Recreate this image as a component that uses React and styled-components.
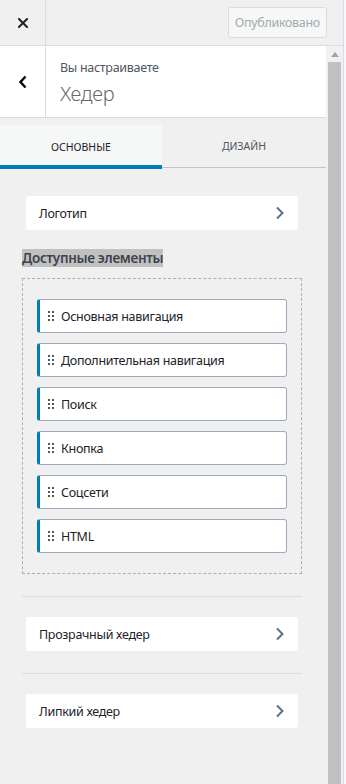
import React from "react";
import styled, { createGlobalStyle } from "styled-components";

const GlobalStyle = createGlobalStyle`
  * { box-sizing: border-box; }
  html, body { margin: 0; padding: 0; background: #ffffff; }
  body {
    font-family: "Noto Sans", "Open Sans", sans-serif;
    color: #1d2327;
    overflow: hidden;
  }
`;

const Page = styled.div`
  display: flex;
  width: 346px;
  height: 784px;
  overflow: hidden;
`;

const Sidebar = styled.div`
  width: 344px;
  flex: none;
  display: flex;
  flex-direction: column;
  background: #f0f0f1;
  border-right: 1px solid #dcdcde;
`;

const Preview = styled.div`
  flex: 1;
  background: #f6f8fb;
`;

const TopBar = styled.div`
  height: 46px;
  flex: none;
  display: flex;
  align-items: center;
  border-bottom: 1px solid #dcdcde;
  background: #f0f0f1;
`;

const CloseButton = styled.div`
  width: 46px;
  height: 45px;
  display: flex;
  align-items: center;
  justify-content: center;
  border-right: 1px solid #dcdcde;
  color: #1d2327;
`;

const PublishButton = styled.div`
  margin-left: auto;
  margin-right: 16px;
  height: 31px;
  padding: 0 6px;
  display: flex;
  align-items: center;
  border: 1px solid #dcdcde;
  border-radius: 3px;
  background: #f6f7f7;
  color: #a7aaad;
  font-size: 12.5px;
  letter-spacing: -0.3px;
`;

const Body = styled.div`
  flex: 1;
  display: flex;
  min-height: 0;
`;

const Content = styled.div`
  width: 326px;
  flex: none;
  display: flex;
  flex-direction: column;
`;

const Scrollbar = styled.div`
  width: 17px;
  flex: none;
  display: flex;
  flex-direction: column;
  align-items: center;
  background: #f1f1f1;
`;

const ScrollArrow = styled.div`
  height: 16px;
  display: flex;
  align-items: center;
  justify-content: center;
`;

const ScrollThumb = styled.div`
  width: 13px;
  flex: 1;
  background: #c1c1c1;
`;

const PanelHeader = styled.div`
  height: 72px;
  display: flex;
  background: #ffffff;
  border-bottom: 1px solid #dcdcde;
`;

const BackButton = styled.div`
  width: 46px;
  display: flex;
  align-items: center;
  justify-content: center;
  border-right: 1px solid #dcdcde;
`;

const HeaderText = styled.div`
  display: flex;
  flex-direction: column;
  padding: 12px 0 0 14px;
`;

const Eyebrow = styled.span`
  font-size: 12.5px;
  letter-spacing: -0.3px;
  line-height: 20px;
  color: #50575e;
`;

const HeaderTitle = styled.span`
  font-size: 20px;
  font-weight: 300;
  line-height: 28px;
  color: #646970;
  margin-top: 2px;
  letter-spacing: -0.3px;
`;

const Tabs = styled.div`
  display: flex;
  margin-top: 7px;
  height: 44px;
`;

const Tab = styled.div`
  width: ${(p) => (p.$active ? "162px" : "164px")};
  height: ${(p) => (p.$active ? "44px" : "43px")};
  display: flex;
  align-items: center;
  justify-content: center;
  font-size: 10.5px;
  text-transform: uppercase;
  background: ${(p) => (p.$active ? "#f6f7f7" : "transparent")};
  color: ${(p) => (p.$active ? "#1d2327" : "#50575e")};
  border-bottom: ${(p) => (p.$active ? "4px solid #007cba" : "1px solid #c3c4c7")};
  padding-top: ${(p) => (p.$active ? "4px" : "0")};
`;

const Section = styled.div`
  display: flex;
  flex-direction: column;
  padding: 0 24px 0 22px;
`;

const Card = styled.div`
  margin: ${(p) => p.$top}px 4px 0;
  height: 34px;
  display: flex;
  align-items: center;
  justify-content: space-between;
  padding: 0 13px;
  background: #ffffff;
  border-radius: 3px;
  font-size: 12.5px;
  letter-spacing: -0.3px;
  color: #1d2327;
`;

const GroupLabel = styled.span`
  align-self: flex-start;
  margin-top: 19px;
  font-size: 13.5px;
  letter-spacing: -0.3px;
  line-height: 18px;
  font-weight: 600;
  color: #3c434a;
  background: #c1c1c1;
`;

const DropZone = styled.div`
  margin-top: 11px;
  display: flex;
  flex-direction: column;
  gap: 10px;
  padding: 20px 14px;
  border: 1px dashed #a7b0bf;
`;

const Item = styled.div`
  height: 34px;
  display: flex;
  align-items: center;
  gap: 7px;
  padding-left: 8px;
  background: #ffffff;
  border: 1px solid #9eabbd;
  border-left: 3px solid #007cba;
  border-radius: 3px;
  font-size: 12.5px;
  letter-spacing: -0.3px;
  color: #1d2327;
`;

const Divider = styled.div`
  height: 1px;
  background: #dcdcde;
  margin-top: ${(p) => p.$top}px;
`;

const CloseIcon = () => (
  <svg width="10" height="10" viewBox="0 0 10 10">
    <path d="M1 1 L9 9 M9 1 L1 9" stroke="#1d2327" strokeWidth="2" strokeLinecap="square" />
  </svg>
);

const BackIcon = () => (
  <svg width="10" height="14" viewBox="0 0 10 14">
    <path d="M7.5 1.5 L2.5 7 L7.5 12.5" fill="none" stroke="#000" strokeWidth="2.4" />
  </svg>
);

const Chevron = () => (
  <svg width="10" height="14" viewBox="0 0 10 14">
    <path d="M2 1.5 L7.5 7 L2 12.5" fill="none" stroke="#5f6f85" strokeWidth="2" />
  </svg>
);

const Handle = () => (
  <svg width="6" height="10" viewBox="0 0 6 10">
    {[0, 4, 8].map((y) =>
      [0, 4].map((x) => <rect key={`${x}-${y}`} x={x} y={y} width="2" height="2" fill="#50575e" />)
    )}
  </svg>
);

const items = [
  "Основная навигация",
  "Дополнительная навигация",
  "Поиск",
  "Кнопка",
  "Соцсети",
  "HTML",
];

export default function App() {
  return (
    <>
      <GlobalStyle />
      <Page>
        <Sidebar>
          <TopBar>
            <CloseButton>
              <CloseIcon />
            </CloseButton>
            <PublishButton>Опубликовано</PublishButton>
          </TopBar>
          <Body>
            <Content>
              <PanelHeader>
                <BackButton>
                  <BackIcon />
                </BackButton>
                <HeaderText>
                  <Eyebrow>Вы настраиваете</Eyebrow>
                  <HeaderTitle>Хедер</HeaderTitle>
                </HeaderText>
              </PanelHeader>
              <Tabs>
                <Tab $active>Основные</Tab>
                <Tab>Дизайн</Tab>
              </Tabs>
              <Section>
                <Card $top={27}>
                  <span>Логотип</span>
                  <Chevron />
                </Card>
                <GroupLabel>Доступные элементы</GroupLabel>
                <DropZone>
                  {items.map((label) => (
                    <Item key={label}>
                      <Handle />
                      <span>{label}</span>
                    </Item>
                  ))}
                </DropZone>
                <Divider $top={22} />
                <Card $top={20}>
                  <span>Прозрачный хедер</span>
                  <Chevron />
                </Card>
                <Divider $top={22} />
                <Card $top={20}>
                  <span>Липкий хедер</span>
                  <Chevron />
                </Card>
              </Section>
            </Content>
            <Scrollbar>
              <ScrollArrow>
                <svg width="8" height="5" viewBox="0 0 8 5">
                  <path d="M0 5 L4 0 L8 5 Z" fill="#a3a3a3" />
                </svg>
              </ScrollArrow>
              <ScrollThumb />
            </Scrollbar>
          </Body>
        </Sidebar>
        <Preview />
      </Page>
    </>
  );
}
